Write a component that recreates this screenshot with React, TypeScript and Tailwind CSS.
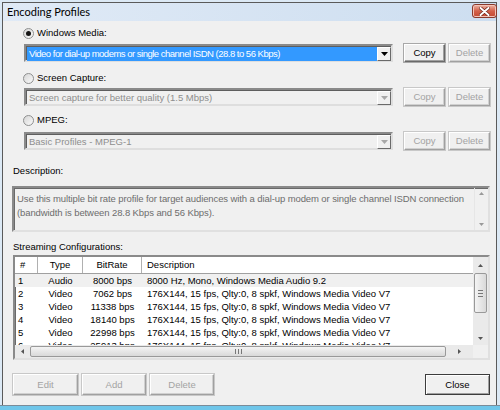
import type { ReactNode } from "react";

const ROWS = [
  { n: "1", type: "Audio", rate: "8000 bps", desc: "8000 Hz, Mono, Windows Media Audio 9.2" },
  { n: "2", type: "Video", rate: "7062 bps", desc: "176X144, 15 fps, Qlty:0, 8 spkf, Windows Media Video V7" },
  { n: "3", type: "Video", rate: "11338 bps", desc: "176X144, 15 fps, Qlty:0, 8 spkf, Windows Media Video V7" },
  { n: "4", type: "Video", rate: "18140 bps", desc: "176X144, 15 fps, Qlty:0, 8 spkf, Windows Media Video V7" },
  { n: "5", type: "Video", rate: "22998 bps", desc: "176X144, 15 fps, Qlty:0, 8 spkf, Windows Media Video V7" },
  { n: "6", type: "Video", rate: "25913 bps", desc: "176X144, 15 fps, Qlty:0, 8 spkf, Windows Media Video V7" },
];

function Tri({ dir, color = "#000", w = 7, h = 4 }: { dir: "up" | "down" | "left" | "right"; color?: string; w?: number; h?: number }) {
  const pts =
    dir === "down"
      ? `0,0 ${w},0 ${w / 2},${h}`
      : dir === "up"
        ? `0,${h} ${w},${h} ${w / 2},0`
        : dir === "left"
          ? `${h},0 ${h},${w} 0,${w / 2}`
          : `0,0 0,${w} ${h},${w / 2}`;
  const vw = dir === "left" || dir === "right" ? h : w;
  const vh = dir === "left" || dir === "right" ? w : h;
  return (
    <svg width={vw} height={vh} viewBox={`0 0 ${vw} ${vh}`}>
      <polygon points={pts} fill={color} />
    </svg>
  );
}

function Radio({ checked, label }: { checked?: boolean; label: string }) {
  return (
    <div className="flex h-[14px] items-center gap-[3px]">
      <span className="flex h-[11px] w-[11px] items-center justify-center rounded-full border border-[#8e8f8f] bg-gradient-to-br from-[#d6d6d6] to-[#fafafa]">
        {checked && <span className="h-[5px] w-[5px] rounded-full bg-[#151515]" />}
      </span>
      <span>{label}</span>
    </div>
  );
}

function Btn({ label, disabled, w, strong }: { label: string; disabled?: boolean; w: string; strong?: boolean }) {
  return (
    <div
      className={`flex items-center justify-center border bg-[#f0f0f0] ${w} ${
        strong
          ? "h-[21px] border-[#3c3c3c] shadow-[inset_1px_1px_0_#fff,inset_-1px_-1px_0_#a0a0a0]"
          : disabled
            ? "h-full border-t-[#fff] border-l-[#fff] border-r-[#a0a0a0] border-b-[#a0a0a0] shadow-[inset_-1px_-1px_0_#d0d0d0,0_0_0_1px_#c8c8c8]"
            : "h-full border-t-[#fff] border-l-[#fff] border-r-[#6a6a6a] border-b-[#6a6a6a] shadow-[inset_-1px_-1px_0_#a0a0a0,0_0_0_1px_#a8a8a8]"
      } ${disabled ? "text-[#a3a3a3]" : "text-black"}`}
    >
      {label}
    </div>
  );
}

function Combo({ text, selected, disabled }: { text: string; selected?: boolean; disabled?: boolean }) {
  return (
    <div className="flex h-[18px] w-[369px] border-2 border-t-[#8a8a8a] border-l-[#8a8a8a] border-b-[#dedede] border-r-[#dedede] bg-[#f0f0f0] shadow-[inset_1px_1px_0_#5e5e5e]">
      <div className="flex flex-1 items-center pl-[1px] pt-[1px]">
        <div
          className={`flex h-[14px] flex-1 items-center whitespace-nowrap pl-[2px] ${
            selected ? "bg-[#3399ff] tracking-[-0.5px] text-white" : disabled ? "text-[#8e8e8e]" : ""
          }`}
        >
          {text}
        </div>
      </div>
      <div className="mt-[1px] flex h-[14px] w-[14px] items-center justify-center border border-t-[#fff] border-l-[#fff] border-r-[#6a6a6a] border-b-[#6a6a6a] bg-[#f0f0f0]">
        <Tri dir="down" color={disabled ? "#a8a8a8" : "#000"} />
      </div>
    </div>
  );
}

function ProfileGroup({ label, text, checked, selected, disabled, top, gap }: {
  label: string;
  text: string;
  checked?: boolean;
  selected?: boolean;
  disabled?: boolean;
  top: string;
  gap: string;
}) {
  return (
    <div className={`flex flex-col pl-[11px] ${top}`}>
      <Radio label={label} checked={checked} />
      <div className={`ml-[1px] flex items-center ${gap}`}>
        <Combo text={text} selected={selected} disabled={disabled} />
        <div className="ml-[11px] flex h-[18px] gap-[4px]">
          <Btn label="Copy" w="w-[41px]" disabled={disabled} />
          <Btn label="Delete" w="w-[41px]" disabled />
        </div>
      </div>
    </div>
  );
}

function Sunken({ children, className }: { children: ReactNode; className: string }) {
  return (
    <div className={`border-2 border-t-[#8a8a8a] border-l-[#8a8a8a] border-b-[#e0e0e0] border-r-[#e0e0e0] shadow-[inset_1px_1px_0_#6a6a6a] ${className}`}>
      {children}
    </div>
  );
}

function CloseButton() {
  return (
    <div className="-mr-[1px] mt-[1px] flex h-[14px] w-[25px] items-center justify-center rounded-[3px] border border-[#8a3a2c] bg-gradient-to-b from-[#eab2a4] via-[#d3614a] to-[#c44a32] shadow-[inset_0_0_0_1px_#f3c5b9]">
      <svg width="11" height="9" viewBox="0 0 11 9">
        <path d="M1.5 1 L9.5 8 M9.5 1 L1.5 8" stroke="#6b2318" strokeWidth="3.4" strokeLinecap="round" />
        <path d="M1.5 1 L9.5 8 M9.5 1 L1.5 8" stroke="#fff" strokeWidth="2" strokeLinecap="round" />
      </svg>
    </div>
  );
}

function ListBox() {
  return (
    <Sunken className="ml-[1px] mt-[2px] flex h-[105px] w-[477px] flex-col bg-white">
      <div className="flex min-h-0 flex-1">
        <div className="flex min-w-0 flex-1 flex-col overflow-hidden">
          <div className="flex h-[17px] shrink-0 items-center border-b border-[#a0a0a0] bg-white">
            <div className="flex h-full w-[23px] items-center border-r border-[#b0b0b0] pl-[5px]">#</div>
            <div className="flex h-full w-[45px] items-center justify-center border-r border-[#b0b0b0]">Type</div>
            <div className="flex h-full w-[59px] items-center justify-center border-r border-[#b0b0b0]">BitRate</div>
            <div className="flex h-full items-center pl-[5px]">Description</div>
          </div>
          <div className="flex flex-col">
            {ROWS.map((r, i) => (
              <div key={r.n} className={`flex h-[13px] shrink-0 items-center whitespace-nowrap ${i === 0 ? "bg-[#f0f0f0]" : ""}`}>
                <div className="w-[23px] pl-[3px]">{r.n}</div>
                <div className="w-[45px] text-center">{r.type}</div>
                <div className="w-[59px] text-center">{r.rate}</div>
                <div className="pl-[5px]">{r.desc}</div>
              </div>
            ))}
          </div>
        </div>
        <div className="flex w-[15px] shrink-0 flex-col items-center bg-[#eaeaea]">
          <div className="flex h-[16px] items-center">
            <Tri dir="up" color="#555" w={5} h={3} />
          </div>
          <div className="flex h-[40px] w-[13px] flex-col items-center justify-center gap-[2px] rounded-[2px] border border-[#999] bg-gradient-to-r from-[#f4f4f4] to-[#d9d9d9]">
            <span className="h-px w-[5px] bg-[#777]" />
            <span className="h-px w-[5px] bg-[#777]" />
            <span className="h-px w-[5px] bg-[#777]" />
          </div>
          <div className="flex-1" />
          <div className="flex h-[14px] items-center">
            <Tri dir="down" color="#555" w={5} h={3} />
          </div>
        </div>
      </div>
      <div className="flex h-[13px] shrink-0">
        <div className="flex flex-1 items-center bg-[#eaeaea]">
          <div className="flex w-[15px] justify-center">
            <Tri dir="left" color="#555" w={5} h={3} />
          </div>
          <div className="flex h-[11px] flex-1 items-center justify-center gap-[2px] rounded-[2px] border border-[#999] bg-gradient-to-b from-[#f4f4f4] to-[#d9d9d9]">
            <span className="h-[5px] w-px bg-[#777]" />
            <span className="h-[5px] w-px bg-[#777]" />
            <span className="h-[5px] w-px bg-[#777]" />
          </div>
          <div className="flex w-[27px] justify-center">
            <Tri dir="right" color="#555" w={5} h={3} />
          </div>
        </div>
        <div className="w-[15px] bg-[#f0f0f0]" />
      </div>
    </Sunken>
  );
}

export default function App() {
  return (
    <div className="flex h-[410px] w-[500px] flex-col overflow-hidden bg-[#dce9f5] font-['Liberation_Sans',Arial,sans-serif] text-[9.5px] leading-none text-black">
      <div className="flex min-h-0 flex-1 pl-[2px] pr-[3px] pt-[2px]">
        <div className="flex flex-1 flex-col border-l border-r border-t border-[#5a5a5a]">
          <div className="flex h-[18px] shrink-0 items-start justify-between bg-gradient-to-r from-[#e0eaf6] to-[#cddef0] pl-[4px]">
            <span className="mt-[3px] font-['Lato',sans-serif] text-[11px] text-black">Encoding Profiles</span>
            <CloseButton />
          </div>
          <div className="flex flex-1 flex-col bg-[#f0f0f0] pl-[9px]">
            <ProfileGroup
              label="Windows Media:"
              text="Video for dial-up modems or single channel ISDN (28.8 to 56 Kbps)"
              checked
              selected
              top="mt-[5px]"
              gap="mt-[4px]"
            />
            <ProfileGroup
              label="Screen Capture:"
              text="Screen capture for better quality (1.5 Mbps)"
              disabled
              top="mt-[9px]"
              gap="mt-[3px]"
            />
            <ProfileGroup
              label="MPEG:"
              text="Basic Profiles - MPEG-1"
              disabled
              top="mt-[7px]"
              gap="mt-[5px]"
            />
            <div className="ml-[1px] mt-[15px] flex h-[12px] items-center">Description:</div>
            <Sunken className="mt-[9px] flex h-[46px] w-[478px] bg-[#f0f0f0]">
              <div className="flex-1 whitespace-nowrap pl-[3px] pt-[4px] leading-[14px] tracking-[-0.1px] text-[#6d6d6d]">
                Use this multiple bit rate profile for target audiences with a dial-up modem or single channel ISDN connection
                <br />
                (bandwidth is between 28.8 Kbps and 56 Kbps).
              </div>
              <div className="flex w-[14px] flex-col items-center justify-between border-l border-[#e6e6e6] py-[4px]">
                <Tri dir="up" color="#9a9a9a" w={5} h={3} />
                <Tri dir="down" color="#9a9a9a" w={5} h={3} />
              </div>
            </Sunken>
            <div className="ml-[1px] mt-[9px] flex h-[12px] items-center">Streaming Configurations:</div>
            <ListBox />
            <div className="mt-[14px] flex h-[21px] items-center pr-[6px]">
              <div className="ml-[1px] flex h-[21px] gap-[4px]">
                <Btn label="Edit" w="w-[65px]" disabled />
                <Btn label="Add" w="w-[64px]" disabled />
                <Btn label="Delete" w="w-[64px]" disabled />
              </div>
              <div className="flex-1" />
              <Btn label="Close" w="w-[65px]" strong />
            </div>
          </div>
        </div>
      </div>
      <div className="h-[5px] shrink-0 border-t border-[#7b8c99] bg-[#6fc6ea]" />
    </div>
  );
}
